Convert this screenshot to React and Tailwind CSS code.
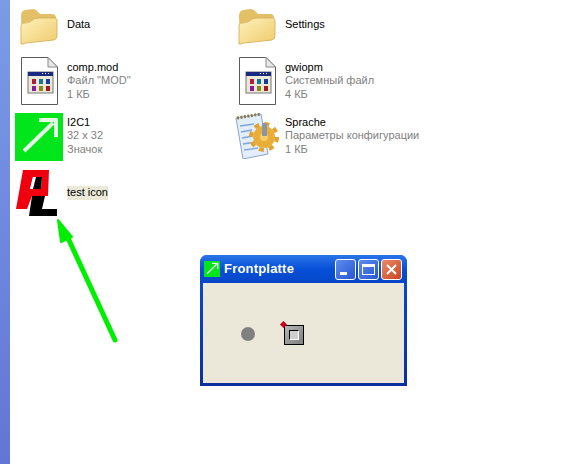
import React from 'react';

const FONT = "font-['Liberation_Sans',Arial,sans-serif]";

const Folder = () => (
  <svg width="38" height="37" viewBox="0 0 38 37" className="block">
    <defs>
      <linearGradient id="folderFront" x1="0" y1="0" x2="1" y2="1">
        <stop offset="0" stopColor="#fff2bd" />
        <stop offset="1" stopColor="#eeca6c" />
      </linearGradient>
    </defs>
    <path d="M2 31 L1 8 Q1 3 5 2 L13 1 Q16 1 18 4 L20 6 L32 6 Q36 6 36 10 L36 14 L6 14 Z" fill="#e3c066" />
    <path d="M1 34 Q0 37 3 36 L6 35 L34 32 Q37 31 37 28 L37 13 Q37 9 33 10 L19 10 Q14 10 11 13 Q9 15 5 15 L3 15 Q1 15 1 18 Z" fill="url(#folderFront)" stroke="#d2ac52" strokeWidth="0.8" />
  </svg>
);

const MiniWindowFile = () => {
  const colors = ['#b01c3c', '#12789a', '#1c3c9a', '#8a1c9a', '#8a8a1c', '#a01c1c'];
  return (
    <svg width="37" height="48" viewBox="0 0 37 48" className="block">
      <path d="M0.5 0.5 H27 L36.5 10 V47.5 H0.5 Z" fill="#fff" stroke="#5a5a5a" />
      <path d="M27 0.5 V10 H36.5 Z" fill="#e8e8e8" stroke="#8a8a8a" />
      <rect x="7" y="15" width="25" height="21" fill="#ece9d8" stroke="#777" />
      <rect x="7" y="15" width="25" height="4" fill="#1a2a80" />
      <rect x="21" y="16" width="1" height="1" fill="#fff" />
      <rect x="24" y="16" width="1" height="1" fill="#fff" />
      <rect x="27" y="16" width="1" height="1" fill="#fff" />
      {colors.map((c, i) => (
        <rect key={i} x={11 + (i % 3) * 7} y={22 + Math.floor(i / 3) * 7} width="4" height="5" fill={c} />
      ))}
    </svg>
  );
};

const GreenArrowIcon = ({ size }) => (
  <svg width={size} height={size} viewBox="0 0 48 48" className="block">
    <rect width="48" height="48" fill="#00e61a" />
    <path d="M9 38 L38 10 M24 7 H41 V24" fill="none" stroke="#e2fbe2" strokeWidth="4" />
  </svg>
);

const ConfigIcon = () => (
  <svg width="46" height="46" viewBox="0 0 46 46" className="block">
    <path d="M2 5 L27 1 L34 41 L9 46 Z" fill="#e3eefc" stroke="#8ca4c4" />
    <path d="M3 5 L27 1" stroke="#8a7a4a" strokeWidth="3" strokeDasharray="2 1.5" />
    <path d="M6 13 L20 11 M7 19 L18 17 M8 25 L19 23 M9 31 L22 29 M10 37 L24 35" stroke="#7ea6d8" strokeWidth="1.3" />
    <circle cx="30" cy="24" r="11" fill="#e8ae38" />
    <circle cx="30" cy="24" r="13" fill="none" stroke="#e0a42e" strokeWidth="4" strokeDasharray="5 5.2" />
    <circle cx="30" cy="24" r="4" fill="#f4cd6c" />
    <rect x="28" y="10" width="5" height="13" fill="#8b96a2" />
  </svg>
);

const PlIcon = () => (
  <svg width="48" height="48" viewBox="0 0 48 48" className="block">
    <path fillRule="evenodd" d="M8 1 H34 L33 27 H17 L12 40 H1 Z M18 8 L15 20 H26 L27 8 Z" fill="#f0000e" />
    <path d="M20 8 H27 L26 20 H17 Z" fill="#000" />
    <path d="M18 8 H21 L18 20 H15 Z" fill="#fff" />
    <path d="M17 27 H30 L27 40 H42 V47 H14 Z" fill="#000" />
  </svg>
);

const FileItem = ({ icon, title, lines = [], highlight = false, iconClass = '' }) => (
  <div className="flex items-center">
    <div className={`flex w-[48px] mr-[4px] shrink-0 items-center justify-center ${iconClass}`}>{icon}</div>
    <div className="text-[11px] leading-[13.5px]">
      <div className={highlight ? 'bg-[#ece9d8] text-black' : 'text-black'}>{title}</div>
      {lines.map(line => (
        <div key={line} className="text-[#7f7f7f]">{line}</div>
      ))}
    </div>
  </div>
);

const TitleButton = ({ children, className }) => (
  <div className={`flex h-[21px] w-[21px] items-center justify-center rounded-[3px] border border-white ${className}`}>
    {children}
  </div>
);

const Frontplatte = () => (
  <div className="absolute left-[200px] top-[255px] flex h-[131px] w-[207px] flex-col overflow-hidden rounded-t-[7px] bg-gradient-to-b from-[#0a4ed8] to-[#0a2f9e]">
    <div className="flex h-[28px] shrink-0 items-center bg-gradient-to-b from-[#2a74e8] via-[#0650d8] to-[#0646c8] pl-[4px] pr-[5px]">
      <GreenArrowIcon size={16} />
      <span className="ml-[4px] text-[13px] font-bold tracking-[0.2px] text-white">Frontplatte</span>
      <div className="ml-auto flex gap-[2px]">
        <TitleButton className="bg-gradient-to-br from-[#5c8cf0] to-[#2a55d0]">
          <div className="mt-[8px] mr-[4px] h-[3px] w-[7px] bg-white" />
        </TitleButton>
        <TitleButton className="bg-gradient-to-br from-[#5c8cf0] to-[#2a55d0]">
          <div className="h-[11px] w-[13px] border border-t-[3px] border-white" />
        </TitleButton>
        <TitleButton className="bg-gradient-to-br from-[#ea8a68] to-[#c8431c]">
          <svg width="13" height="13" viewBox="0 0 13 13">
            <path d="M2 2 L11 11 M11 2 L2 11" stroke="#fff" strokeWidth="2" />
          </svg>
        </TitleButton>
      </div>
    </div>
    <div className="relative mx-[3px] mb-[3px] flex-1 bg-[#ebe8da]">
      <div className="absolute left-[38px] top-[44px] h-[14px] w-[14px] rounded-full bg-[#808080]" />
      <div className="absolute left-[81px] top-[42px] flex h-[20px] w-[20px] items-center justify-center border border-black bg-gradient-to-br from-[#b5b5b5] to-[#808080]">
        <div className="h-[10px] w-[10px] border border-t-black border-l-black border-r-white border-b-white bg-[#cfcfcf]" />
      </div>
      <div className="absolute left-[78px] top-[39px] h-[5px] w-[5px] rotate-45 bg-[#c00020]" />
    </div>
  </div>
);

export default function App() {
  return (
    <div className={`relative flex h-[464px] w-[561px] overflow-hidden bg-white ${FONT}`}>
      <div className="w-[10px] shrink-0 bg-gradient-to-b from-[#7b9be6] to-[#6375d6]" />
      <div className="grid h-fit grid-cols-[218px_1fr] pl-[5px] pt-[4px]">
        <div className="flex flex-col">
          <div className="flex h-[42px] items-center">
            <FileItem icon={<Folder />} iconClass="mt-[2px]" title="Data" />
          </div>
          <div className="mt-[11px] flex h-[48px] items-center">
            <FileItem icon={<MiniWindowFile />} title="comp.mod" lines={['Файл "MOD"', '1 КБ']} />
          </div>
          <div className="mt-[7px] flex h-[48px] items-center">
            <FileItem icon={<GreenArrowIcon size={48} />} iconClass="mt-[2px]" title="I2C1" lines={['32 x 32', 'Значок']} />
          </div>
          <div className="mt-[9px] flex h-[48px] items-center">
            <FileItem icon={<PlIcon />} title="test icon" highlight />
          </div>
        </div>
        <div className="flex flex-col">
          <div className="flex h-[42px] items-center">
            <FileItem icon={<Folder />} iconClass="mt-[2px]" title="Settings" />
          </div>
          <div className="mt-[11px] flex h-[48px] items-center">
            <FileItem icon={<MiniWindowFile />} title="gwiopm" lines={['Системный файл', '4 КБ']} />
          </div>
          <div className="mt-[7px] flex h-[48px] items-center">
            <FileItem icon={<ConfigIcon />} title="Sprache" lines={['Параметры конфигурации', '1 КБ']} />
          </div>
        </div>
      </div>
      <svg width="561" height="464" className="pointer-events-none absolute left-0 top-0">
        <path d="M115 340 L68 238" stroke="#00ee00" strokeWidth="5" strokeLinecap="round" />
        <path d="M58 220 L72 237 L61 242 Z" fill="#00ee00" stroke="#00ee00" strokeWidth="2" strokeLinejoin="round" />
      </svg>
      <Frontplatte />
    </div>
  );
}
